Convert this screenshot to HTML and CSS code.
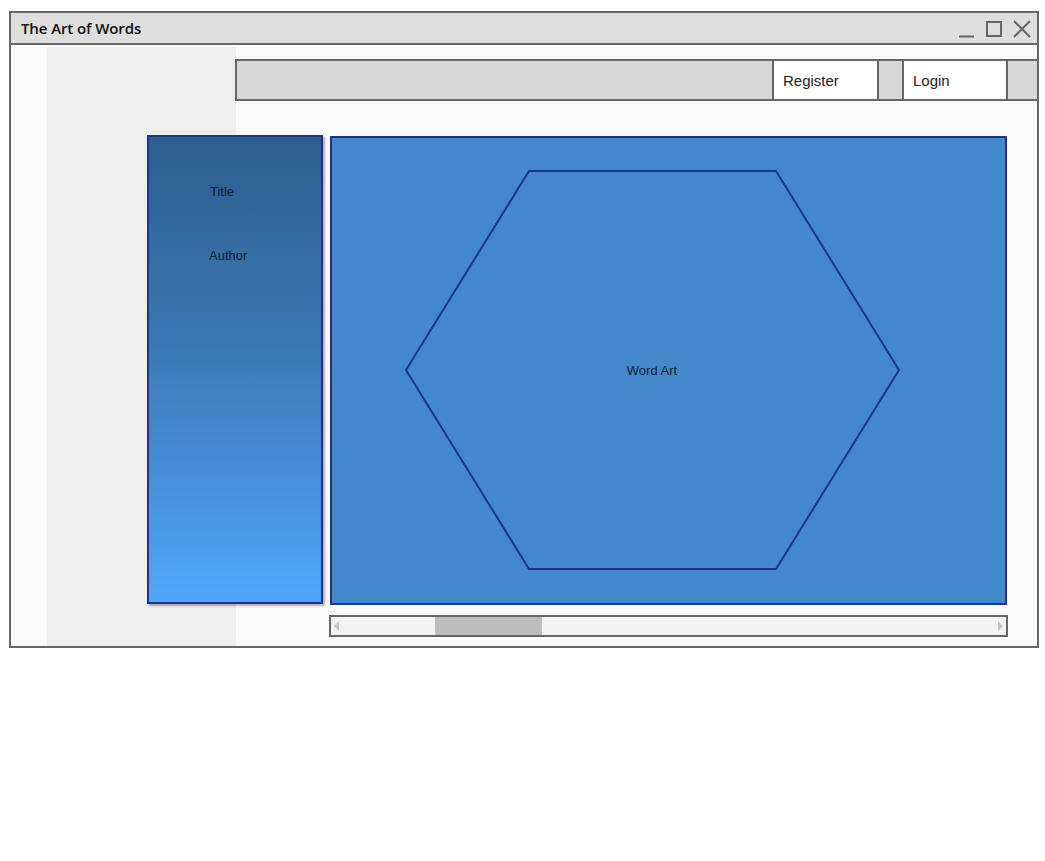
FILE: index.html
```html
<!DOCTYPE html>
<html>
<head>
<meta charset="utf-8">
<title>The Art of Words</title>
<link rel="stylesheet" href="styles.css">
</head>
<body>
<div class="window">
  <div class="titlebar">
    <span class="title">The Art of Words</span>
    <div class="controls">
      <svg class="ctl" width="82" height="30" viewBox="0 0 82 30">
        <line x1="8" y1="23.5" x2="23" y2="23.5" stroke="#666" stroke-width="2"/>
        <rect x="36" y="9" width="14" height="14" fill="none" stroke="#666" stroke-width="2"/>
        <path d="M63 8 L79 24 M79 8 L63 24" stroke="#666" stroke-width="2" fill="none"/>
      </svg>
    </div>
  </div>
  <div class="content">
    <nav class="navbar">
      <div class="nav-fill"></div>
      <div class="nav-btn">Register</div>
      <div class="nav-gap"></div>
      <div class="nav-btn">Login</div>
      <div class="nav-end"></div>
    </nav>
    <div class="panels">
      <div class="side">
        <div class="side-title">Title</div>
        <div class="side-author">Author</div>
      </div>
      <div class="main">
        <svg class="art" width="673" height="465" viewBox="0 0 673 465">
          <polygon points="197,33 444,33 567,232 444,431 197,431 74,232" fill="none" stroke="#1c3587" stroke-width="2"/>
          <text x="320" y="237" text-anchor="middle" class="art-label">Word Art</text>
        </svg>
      </div>
    </div>
    <div class="scrollbar">
      <svg class="arrow" width="8" height="12" viewBox="0 0 8 12"><polygon points="6,1 6,11 1,6" fill="#c4c4c4"/></svg>
      <div class="track"><div class="thumb"></div></div>
      <svg class="arrow" width="8" height="12" viewBox="0 0 8 12"><polygon points="2,1 2,11 7,6" fill="#c4c4c4"/></svg>
    </div>
  </div>
</div>
</body>
</html>
```

FILE: styles.css
```css
html, body {
  margin: 0;
  padding: 0;
  background: #ffffff;
}

.window {
  margin: 11px 0 0 9px;
  width: 1026px;
  border: 2px solid #666666;
  font-family: "Liberation Sans", Arial, sans-serif;
}

.titlebar {
  height: 30px;
  background: #dedede;
  border-bottom: 2px solid #666666;
  display: flex;
  align-items: center;
  justify-content: space-between;
}

.title {
  font-family: "Open Sans", sans-serif;
  font-weight: 600;
  font-size: 15px;
  color: #111111;
  padding-left: 10px;
  letter-spacing: -0.1px;
}

.controls {
  display: flex;
  height: 30px;
  padding-right: 4px;
}

.ctl {
  display: block;
}

.content {
  height: 601px;
  background: linear-gradient(to right, #fafafa 0, #fafafa 36px, #eeeeee 36px, #eeeeee 225px, #fafafa 225px);
  background-repeat: no-repeat;
  background-size: 100% 599px;
  background-position: 0 2px;
  background-color: #fafafa;
  padding-top: 14px;
  box-sizing: border-box;
}

.navbar {
  display: flex;
  margin-left: 224px;
  margin-right: -2px;
  height: 42px;
  box-sizing: border-box;
  border: 2px solid #666666;
  background: #d8d8d8;
}

.nav-fill {
  flex: 1;
}

.nav-btn {
  background: #ffffff;
  border-left: 2px solid #666666;
  border-right: 2px solid #666666;
  box-sizing: border-box;
  width: 107px;
  padding-left: 9px;
  padding-top: 1px;
  display: flex;
  align-items: center;
  font-size: 15px;
  color: #222222;
}

.nav-btn + .nav-gap + .nav-btn {
  width: 106px;
}

.nav-gap {
  width: 23px;
}

.nav-end {
  width: 29px;
}

.panels {
  display: flex;
  align-items: flex-start;
  gap: 7px;
  margin-left: 136px;
  margin-top: 34px;
}

.side {
  width: 176px;
  height: 469px;
  box-sizing: border-box;
  border: 2px solid #1c3587;
  background: linear-gradient(to bottom, #2e5d8e 0%, #3a78b5 45%, #52a6fa 100%);
  box-shadow: 2px 2px 2px rgba(0, 0, 0, 0.3);
  padding-left: 61px;
  font-size: 13px;
  color: #16202e;
}

.side-title {
  margin-top: 47px;
  line-height: 16px;
}

.side-author {
  margin-top: 48px;
  margin-left: -1px;
  line-height: 16px;
}

.main {
  margin-top: 1px;
  width: 677px;
  height: 469px;
  box-sizing: border-box;
  border: 2px solid #1c3587;
  background: #4488cc;
}

.art {
  display: block;
}

.art-label {
  font-family: "Liberation Sans", Arial, sans-serif;
  font-size: 13px;
  fill: #16202e;
}

.scrollbar {
  margin-left: 318px;
  margin-top: 10px;
  width: 679px;
  height: 22px;
  box-sizing: border-box;
  border: 2px solid #666666;
  background: #f2f2f2;
  display: flex;
  align-items: center;
}

.arrow {
  display: block;
  margin: 0 2px;
}

.track {
  flex: 1;
  height: 18px;
  padding-left: 92px;
}

.thumb {
  width: 107px;
  height: 18px;
  background: #bdbdbd;
}
```
